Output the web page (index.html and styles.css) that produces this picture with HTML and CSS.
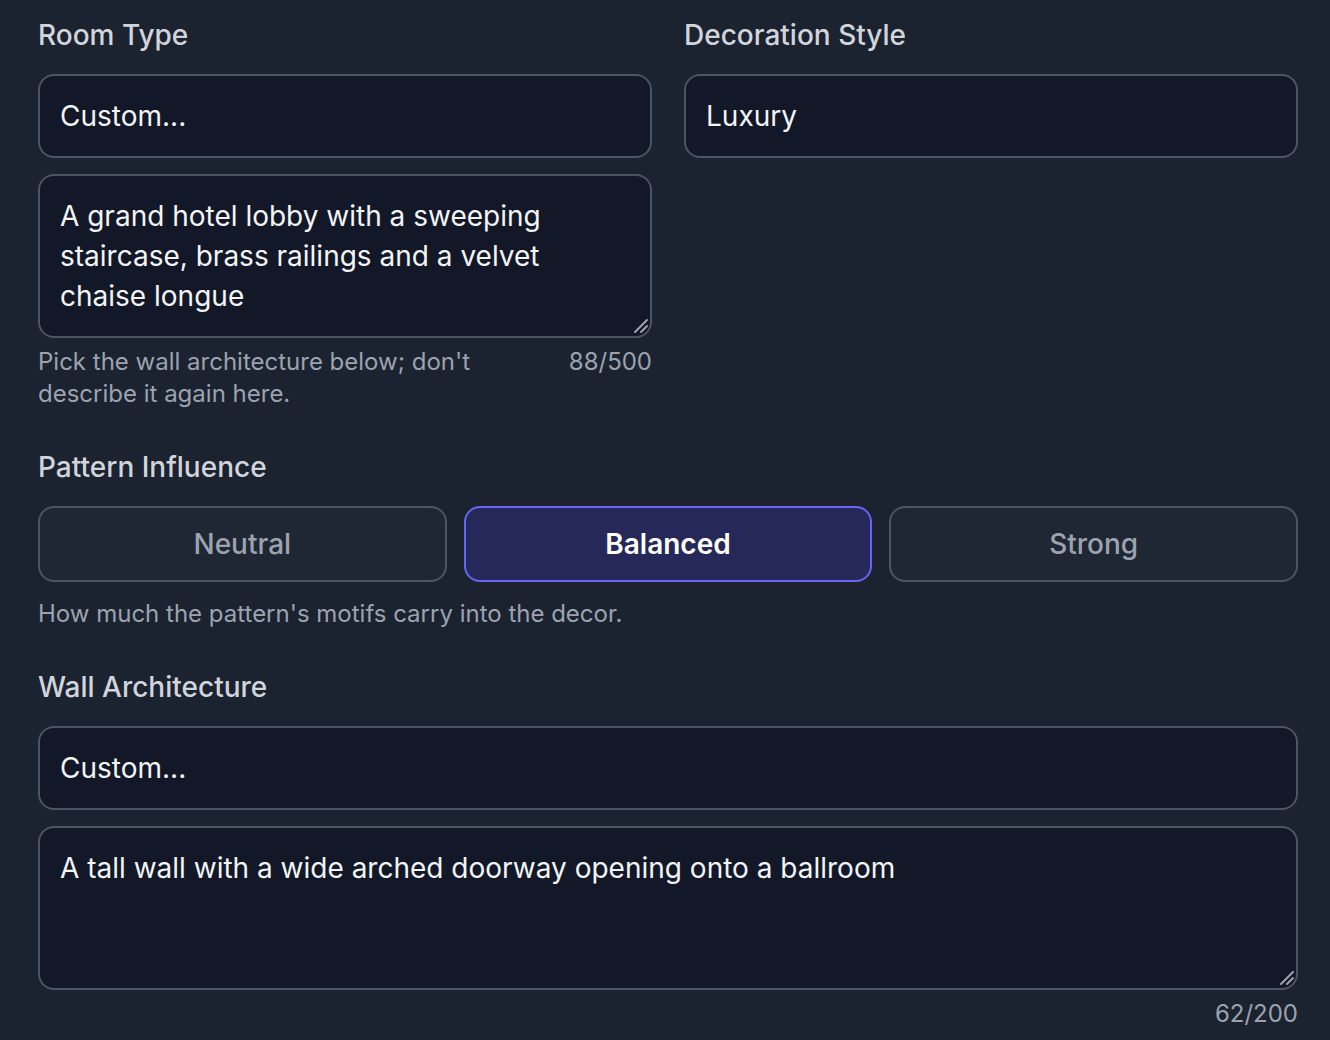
FILE: index.html
```html
<!DOCTYPE html>
<html lang="en">

<head>
    <meta charset="UTF-8" />
    <meta name="viewport" content="width=device-width, initial-scale=1.0" />
    <title>Room Settings</title>
    <link rel="stylesheet" href="styles.css">
</head>

<body>
    <div class="panel">
        <div class="row-two">
            <div class="field">
                <label class="field-label" for="room-type">Room Type</label>
                <select id="room-type" class="select">
                    <option>Custom...</option>
                </select>
                <div class="textarea-wrap">
                    <textarea class="textarea" rows="3">A grand hotel lobby with a sweeping staircase, brass railings and a velvet chaise longue</textarea>
                    <svg class="grip" width="16" height="16" viewBox="0 0 16 16">
                        <path d="M2 14 L14 2 M8 14 L14 8" stroke="#9ca3af" stroke-width="2" stroke-linecap="round" />
                    </svg>
                </div>
                <div class="helper-row">
                    <p class="helper">Pick the wall architecture below; don't describe it again here.</p>
                    <span class="counter">88/500</span>
                </div>
            </div>

            <div class="field">
                <label class="field-label" for="decor-style">Decoration Style</label>
                <select id="decor-style" class="select">
                    <option>Luxury</option>
                </select>
            </div>
        </div>

        <div class="field section">
            <span class="field-label">Pattern Influence</span>
            <div class="segments">
                <button type="button" class="segment">Neutral</button>
                <button type="button" class="segment active">Balanced</button>
                <button type="button" class="segment">Strong</button>
            </div>
            <p class="helper helper-gap">How much the pattern's motifs carry into the decor.</p>
        </div>

        <div class="field section">
            <label class="field-label" for="wall-arch">Wall Architecture</label>
            <select id="wall-arch" class="select">
                <option>Custom...</option>
            </select>
            <div class="textarea-wrap">
                <textarea class="textarea" rows="3">A tall wall with a wide arched doorway opening onto a ballroom</textarea>
                <svg class="grip" width="16" height="16" viewBox="0 0 16 16">
                    <path d="M2 14 L14 2 M8 14 L14 8" stroke="#9ca3af" stroke-width="2" stroke-linecap="round" />
                </svg>
            </div>
            <div class="helper-row end">
                <span class="counter">62/200</span>
            </div>
        </div>
    </div>
</body>

</html>
```

FILE: styles.css
```css
* {
    margin: 0;
    padding: 0;
    box-sizing: border-box;
}

body {
    background-color: #1b2230;
    font-family: Inter, 'Noto Sans', sans-serif;
    color: #f3f4f6;
    min-height: 100vh;
}

.panel {
    padding: 15px 32px 0 38px;
}

.row-two {
    display: grid;
    grid-template-columns: 1fr 1fr;
    gap: 32px;
    align-items: start;
}

.field {
    display: flex;
    flex-direction: column;
}

.section {
    margin-top: 37px;
}

.field-label {
    font-size: 28px;
    line-height: 40px;
    font-weight: 500;
    color: #d1d5db;
    margin-bottom: 19px;
}

.select,
.textarea {
    width: 100%;
    font-family: inherit;
    font-size: 28px;
    line-height: 40px;
    color: #f3f4f6;
    background-color: #121827;
    border: 2px solid #4b5563;
    border-radius: 16px;
    padding: 20px;
    outline: none;
}

.select {
    appearance: none;
    -webkit-appearance: none;
    height: 84px;
    padding-top: 0;
    padding-bottom: 0;
}

.textarea-wrap {
    position: relative;
    margin-top: 16px;
}

.textarea {
    display: block;
    resize: none;
    height: 164px;
}

.grip {
    position: absolute;
    right: 3px;
    bottom: 4px;
    pointer-events: none;
}

.helper-row {
    display: flex;
    justify-content: space-between;
    align-items: flex-start;
    gap: 16px;
    margin-top: 8px;
}

.helper-row.end {
    justify-content: flex-end;
}

.helper {
    font-size: 24px;
    line-height: 32px;
    color: #9ca3af;
    max-width: 470px;
}

.helper-gap {
    margin-top: 16px;
    max-width: none;
}

.counter {
    font-size: 24px;
    line-height: 32px;
    color: #9ca3af;
    white-space: nowrap;
}

.segments {
    display: grid;
    grid-template-columns: repeat(3, 1fr);
    gap: 17px;
}

.segment {
    height: 76px;
    font-family: inherit;
    font-size: 28px;
    font-weight: 500;
    color: #9ca3af;
    background-color: #1f2734;
    border: 2px solid #4b5563;
    border-radius: 16px;
    cursor: pointer;
}

.segment.active {
    color: #ffffff;
    font-weight: 600;
    background-color: #252858;
    border-color: #6366f1;
}
```
